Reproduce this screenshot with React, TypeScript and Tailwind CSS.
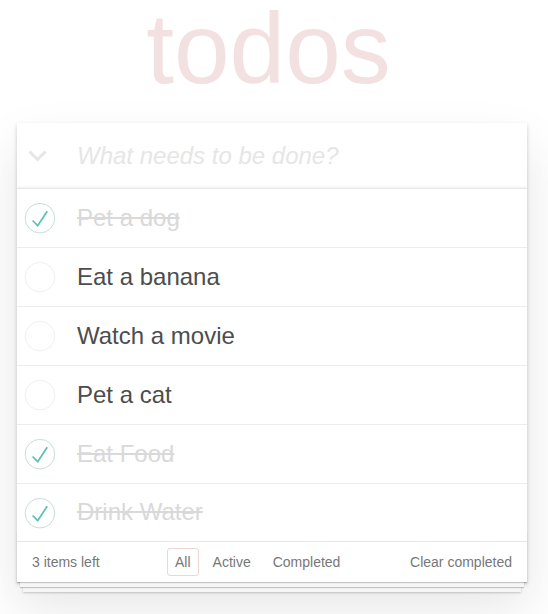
import React from "react";

type Todo = { title: string; done: boolean };

const todos: Todo[] = [
  { title: "Pet a dog", done: true },
  { title: "Eat a banana", done: false },
  { title: "Watch a movie", done: false },
  { title: "Pet a cat", done: false },
  { title: "Eat Food", done: true },
  { title: "Drink Water", done: true },
];

function Toggle({ done }: { done: boolean }) {
  return (
    <svg width="40" height="40" viewBox="-10 -18 100 135" className="shrink-0">
      <circle
        cx="50"
        cy="50"
        r="50"
        fill="none"
        stroke={done ? "#bddad5" : "#ededed"}
        strokeWidth="3"
      />
      {done && <path fill="#5dc2af" d="M72 25L42 71 27 56l-4 4 20 20 34-52z" />}
    </svg>
  );
}

export default function App() {
  return (
    <div className="min-h-screen bg-white font-['Liberation_Sans',Arial,sans-serif] text-[14px] text-[#4d4d4d] pb-[32px]">
      <h1 className="ml-[17px] h-[96px] w-[510px] pr-[7px] text-center text-[100px] font-thin leading-[96px] text-[rgba(175,47,47,0.15)]">
        todos
      </h1>
      <section className="relative ml-[17px] mt-[27px] w-[510px] bg-white shadow-[0_2px_4px_0_rgba(0,0,0,0.2),0_25px_50px_0_rgba(0,0,0,0.1)]">
        <header className="flex h-[65px] items-center shadow-[inset_0_-2px_1px_rgba(0,0,0,0.03)]">
          <div className="flex w-[60px] shrink-0 items-center pl-[11px]">
            <svg width="19" height="12" viewBox="0 0 19 12">
              <polyline
                points="1.5,1.5 9.5,9.5 17.5,1.5"
                fill="none"
                stroke="#e6e6e6"
                strokeWidth="3"
              />
            </svg>
          </div>
          <input
            className="min-w-0 flex-1 bg-transparent pr-4 text-[24px] italic outline-none placeholder:text-[#e6e6e6]"
            placeholder="What needs to be done?"
          />
        </header>
        <main className="border-t border-[#e6e6e6]">
          <ul>
            {todos.map((t) => (
              <li
                key={t.title}
                className="flex h-[59px] items-center border-b border-[#ededed] last:h-[57px] last:border-b-0"
              >
                <div className="flex w-[60px] shrink-0 items-center">
                  <Toggle done={t.done} />
                </div>
                <span
                  className={
                    t.done
                      ? "text-[24px] leading-[1.2] text-[#d9d9d9] line-through"
                      : "text-[24px] leading-[1.2] text-[#4d4d4d]"
                  }
                >
                  {t.title}
                </span>
              </li>
            ))}
          </ul>
        </main>
        <footer className="relative flex h-[41px] items-center border-t border-[#e6e6e6] px-[15px] text-[14px] leading-[20px] text-[#777]">
          <div className="pointer-events-none absolute bottom-0 left-0 right-0 h-[50px] shadow-[0_1px_1px_rgba(0,0,0,0.2),0_8px_0_-3px_#f6f6f6,0_9px_1px_-3px_rgba(0,0,0,0.2),0_16px_0_-6px_#f6f6f6,0_17px_2px_-6px_rgba(0,0,0,0.2)]" />
          <span className="relative w-[132px] shrink-0">3 items left</span>
          <ul className="relative flex items-center">
            <li className="m-[3px]">
              <a className="block rounded-[3px] border border-[rgba(175,47,47,0.2)] px-[7px] py-[3px]">All</a>
            </li>
            <li className="m-[3px]">
              <a className="block rounded-[3px] border border-transparent px-[7px] py-[3px]">Active</a>
            </li>
            <li className="m-[3px]">
              <a className="block rounded-[3px] border border-transparent px-[7px] py-[3px]">Completed</a>
            </li>
          </ul>
          <div className="flex-1" />
          <button className="relative text-[#777]">Clear completed</button>
        </footer>
      </section>
    </div>
  );
}
